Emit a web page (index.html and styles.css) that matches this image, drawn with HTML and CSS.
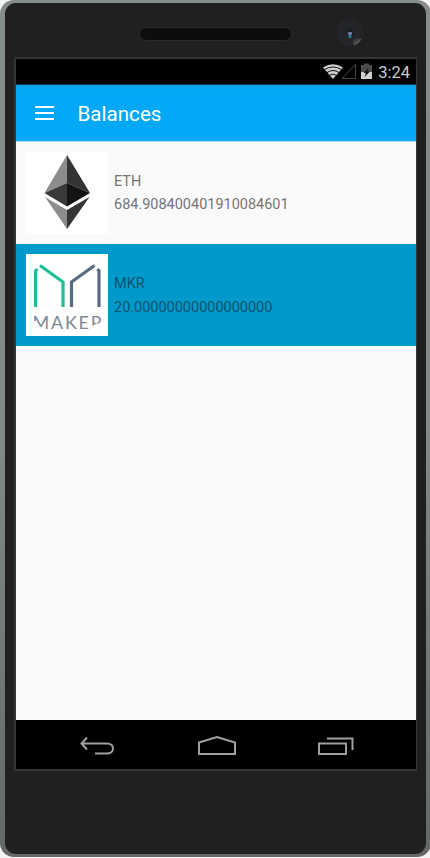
FILE: index.html
```html
<!DOCTYPE html>
<html lang="en">
<head>
<meta charset="utf-8">
<title>Balances</title>
<link rel="stylesheet" href="styles.css">
</head>
<body>
<div class="phone">
  <div class="body">
    <div class="bezel">
      <div class="speaker"></div>
      <svg class="camera" width="28" height="28" viewBox="0 0 28 28">
        <defs><linearGradient id="glare" x1="0" y1="0" x2="1" y2="1"><stop offset=".2" stop-color="#242427"/><stop offset="1" stop-color="#777"/></linearGradient></defs>
        <circle cx="14" cy="14.500" r="13.500" fill="#242528"/>
        <path d="M15 19 25.500 21A13.500 13.500 0 0 1 18 27.500Z" fill="url(#glare)"/>
        <ellipse cx="14" cy="14.500" rx="3" ry="4" fill="#171b24"/>
        <rect x="12" y="14" width="4" height="3" rx="1" fill="#7478a5"/>
        <rect x="12.500" y="17" width="3" height="3" rx="1" fill="#168a98"/>
      </svg>
    </div>
    <div class="screen">
      <div class="status">
        <svg width="52" height="18" viewBox="0 0 52 18">
          <path d="M0 4.500Q10 -2 20 4.500L10 16Z" fill="#cacaca"/>
          <path d="M1.500 6.500Q10 1.500 18.500 6.500M4 9.500Q10 5.500 16 9.500M6.500 12.300Q10 10 13.500 12.300" fill="none" stroke="#000" stroke-width=".9"/>
          <path d="M19 15.500H32.500V1.500Z" fill="none" stroke="#484848"/>
          <path d="M38 2H41V0.500H46V2H49V9H38Z" fill="#4c4c4c"/>
          <path d="M38 9H49V16H38Z" fill="#d0d0d0"/>
          <path d="M45.500 4.500 40.500 10H43L41.500 14 47 8.500H44.200Z" fill="#111"/>
        </svg>
        <span class="clock">3:24</span>
      </div>
      <div class="appbar">
        <svg width="19" height="14" viewBox="0 0 19 14"><path d="M0 1H19M0 7H19M0 13H19" stroke="#fff" stroke-width="2"/></svg>
        <span class="title">Balances</span>
      </div>
      <div class="list">
        <div class="row">
          <svg class="logo" width="82" height="82" viewBox="0 0 82 82">
            <rect width="82" height="82" fill="#fff"/>
            <path d="M41 3V31L18.500 41Z" fill="#8c8c8c"/>
            <path d="M41 3V31L64 41Z" fill="#343434"/>
            <path d="M41 31V54.500L18.500 41Z" fill="#393939"/>
            <path d="M41 31V54.500L64 41Z" fill="#141414"/>
            <path d="M19 45 41 58V77Z" fill="#8c8c8c"/>
            <path d="M63.500 45 41 58V77Z" fill="#353535"/>
          </svg>
          <div class="text"><div>ETH</div><div>684.908400401910084601</div></div>
        </div>
        <div class="row selected">
          <svg class="logo" width="82" height="82" viewBox="0 0 82 82">
            <defs><clipPath id="wordmark"><path d="M8 61H75.500V69.500H70V71.500H66V76H10V67H8Z"/></clipPath></defs>
            <rect width="82" height="82" fill="#fff"/>
            <g fill="none" stroke-width="3.200">
              <path d="M9.600 53V17L11.500 15M14 11.500 37 28V53" stroke="#1fbf98"/>
              <path d="M73 53V17L71.500 15M68.500 11.500 45.500 28V53" stroke="#596b80"/>
            </g>
            <text class="brand" x="6.500" y="74.500" textLength="69.500" lengthAdjust="spacing" clip-path="url(#wordmark)">MAKER</text>
          </svg>
          <div class="text"><div>MKR</div><div>20.00000000000000000</div></div>
        </div>
      </div>
      <div class="nav">
        <svg width="36" height="20" viewBox="0 0 36 20"><path d="M8 1.500 2.500 7.500 8 13.500M2.500 7.500H28C36 7.500 36 17.500 28 17.500H16" fill="none" stroke="#a0a0a0" stroke-width="2"/></svg>
        <svg width="38" height="20" viewBox="0 0 38 20"><path d="M1 18V6.500L19 1 37 6.500V18Z" fill="none" stroke="#a0a0a0" stroke-width="2"/></svg>
        <svg width="36" height="20" viewBox="0 0 36 20"><path d="M1 7.500H28V18H1ZM9 2.500H34.500V14" fill="none" stroke="#a0a0a0" stroke-width="2"/></svg>
      </div>
    </div>
  </div>
</div>
</body>
</html>
```
FILE: styles.css
```css
* { box-sizing: border-box; }
body {
  margin: 0;
  width: 430px;
  height: 858px;
  overflow: hidden;
  background: #f4f4f4;
  font-family: Roboto, "Liberation Sans", sans-serif;
}
svg { display: block; flex: none; }
.phone {
  width: 431px;
  height: 857px;
  padding: 3px 5px 3px;
  border-radius: 14px;
  background: linear-gradient(#868c89, #838987 50%, #646967);
}
.body {
  height: 851px;
  border-radius: 11px;
  background: #202020;
  padding: 0 9px;
}
.bezel {
  height: 54px;
  display: flex;
  align-items: flex-start;
  padding: 15px 0 0 125px;
}
.speaker {
  width: 153px;
  height: 14px;
  margin-top: 9px;
  border: 1px solid #292929;
  border-radius: 7px;
  background: #0d0d0d;
}
.camera { margin-left: 44px; }
.screen {
  width: 403px;
  height: 714px;
  border: 2px solid #353535;
  border-right-width: 1px;
  background: #fafafa;
}
.status {
  height: 26px;
  background: #000;
  border-bottom: 1px solid #06384f;
  display: flex;
  align-items: center;
  justify-content: flex-end;
  padding-right: 6px;
}
.clock {
  width: 35px;
  margin-top: 3px;
  text-align: right;
  font-size: 16.5px;
  line-height: 20px;
  color: #cacaca;
}
.appbar {
  height: 56px;
  display: flex;
  align-items: center;
  gap: 23.5px;
  padding-left: 19px;
  background: linear-gradient(#079fe5, #03a9f7 5px);
}
.appbar svg { margin-top: -1px; }
.title { color: #fff; font-size: 20.6px; line-height: 24px; margin-top: 2px; }
.list { height: 579px; border-top: 1px solid #a8e0fc; background: #fafafa; }
.row {
  height: 102px;
  display: flex;
  align-items: center;
  gap: 6px;
  padding-left: 10px;
  color: #767676;
  font-size: 14.47px;
  line-height: 23.5px;
}
.selected { background: #0099cc; color: #07566f; }
.selected .text { margin-top: 1px; }
.brand { font-family: Lato, sans-serif; font-size: 18px; fill: #7e8995; }
.nav {
  height: 49px;
  display: flex;
  justify-content: space-between;
  padding: 16px 62px 0 63px;
  background: #000;
}
```
